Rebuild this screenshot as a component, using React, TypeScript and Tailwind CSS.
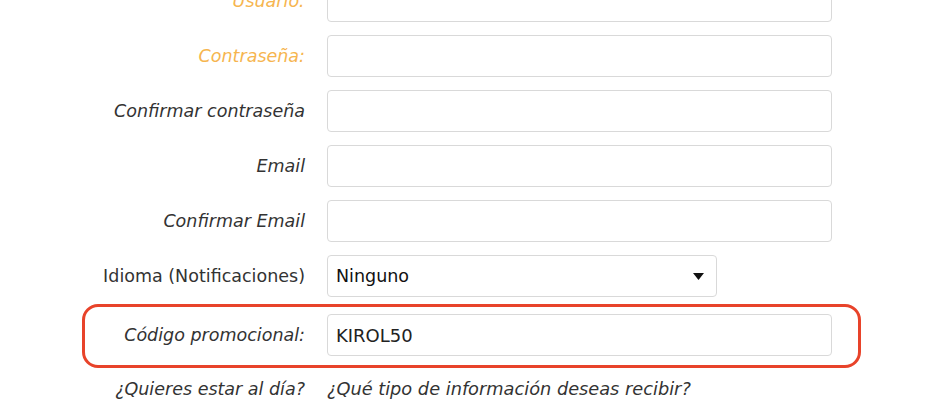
const fieldFont = { fontFamily: '"DejaVu Sans", "Liberation Sans", sans-serif' };

interface RowProps {
  label: string;
  tone?: "orange" | "gray";
  italic?: boolean;
  children: React.ReactNode;
  labelWidth?: string;
}

const Row = ({ label, tone = "gray", italic = true, children, labelWidth = "w-[305px]" }: RowProps) => (
  <div className="flex items-center gap-[22px]">
    <label
      className={`${labelWidth} shrink-0 whitespace-nowrap text-right text-[17.5px] ${italic ? "italic" : ""} ${
        tone === "orange" ? "text-[#f6b54f]" : "text-[#333333]"
      }`}
    >
      {label}
    </label>
    {children}
  </div>
);

const TextInput = ({ value = "" }: { value?: string }) => (
  <input
    readOnly
    value={value}
    className="h-[42px] w-[505px] rounded-[4px] border border-[#d9d9d9] bg-white px-[8px] text-[18px] text-[#222] outline-none"
  />
);

export default function App() {
  return (
    <div className="h-[400px] w-[940px] overflow-hidden bg-white" style={fieldFont}>
      <div className="-mt-[20px] flex flex-col gap-[13px]">
        <Row label="Usuario:" tone="orange">
          <TextInput />
        </Row>
        <Row label="Contraseña:" tone="orange">
          <TextInput />
        </Row>
        <Row label="Confirmar contraseña">
          <TextInput />
        </Row>
        <Row label="Email">
          <TextInput />
        </Row>
        <Row label="Confirmar Email">
          <TextInput />
        </Row>
        <Row label="Idioma (Notificaciones)" italic={false}>
          <div className="flex h-[42px] w-[390px] items-center justify-between rounded-[4px] border border-[#d9d9d9] bg-white pl-[8px] pr-[12px] text-[17.5px] text-[#111]">
            <span>Ninguno</span>
            <svg width="11" height="7" viewBox="0 0 11 7">
              <path d="M0 0h11L5.5 7z" fill="#111" />
            </svg>
          </div>
        </Row>
        <div className="-mt-[6px] ml-[82px] w-[779px] rounded-[16px] border-[3px] border-[#e8432a] pb-[9px] pt-[7px]">
          <Row label="Código promocional:" labelWidth="w-[220px]">
            <TextInput value="KIROL50" />
          </Row>
        </div>
        <div className="-mt-[5px]">
          <Row label="¿Quieres estar al día?">
            <span className="whitespace-nowrap text-[17.75px] italic text-[#333333]">¿Qué tipo de información deseas recibir?</span>
          </Row>
        </div>
      </div>
    </div>
  );
}
